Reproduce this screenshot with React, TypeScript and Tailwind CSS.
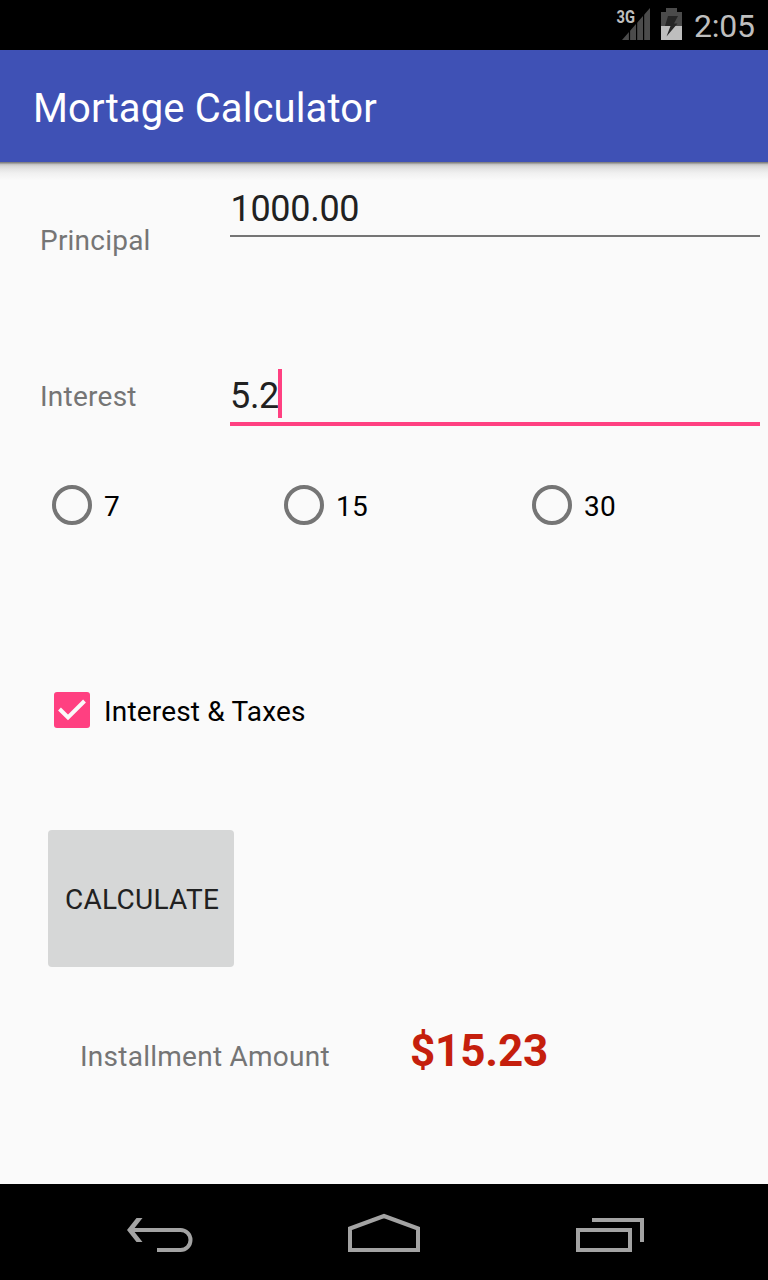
import React, { useState } from "react";

function StatusBar() {
  return (
    <div className="flex h-[50px] items-center justify-end bg-black pr-[11px] text-[#bebebe]">
      <div className="flex h-[50px] w-[36px] shrink-0">
        <svg width="36" height="50" viewBox="0 0 36 50">
          <path d="M35 8V40H7Z" fill="#4b4b4b" />
          <path d="M14.500 28V40M21.600 20V40M28.600 12V40" stroke="#000" strokeWidth="1.2" />
          <path d="M0 8H20.500V24H0Z" fill="#000" />
          <text x="1.500" y="23" fontSize="18" fontWeight="700" fill="#bebebe" fontFamily="Roboto, sans-serif" textLength="18.5" lengthAdjust="spacingAndGlyphs">
            3G
          </text>
        </svg>
      </div>
      <svg className="ml-[10px]" width="22" height="50" viewBox="0 0 22 50">
        <path d="M0 12H5V8H16V12H21V26H0Z" fill="#4b4b4b" />
        <path d="M0 26H21V40H0Z" fill="#bebebe" />
        <path d="M7 16H17L13 23.500H16.500L5.500 36.500L9.500 26H4Z" fill="#262626" />
      </svg>
      <span className="ml-[11px] w-[63px] whitespace-nowrap pt-[2px] text-[32px] leading-[50px] tracking-[-0.2px]">2:05</span>
    </div>
  );
}

function Radio({ label, width, onPick, picked }: { label: string; width: string; onPick: () => void; picked: boolean }) {
  return (
    <button type="button" role="radio" aria-checked={picked} onClick={onPick} className={`flex items-center text-black ${width}`}>
      <span className="flex size-10 items-center justify-center rounded-full border-4 border-[#757575]">
        {picked && <span className="size-5 rounded-full bg-[#ff4081]" />}
      </span>
      <span className="ml-3 pt-[4px] text-[28px] leading-10 tracking-[0.3px]">{label}</span>
    </button>
  );
}

function NavigationBar() {
  return (
    <div className="flex h-24 items-center justify-between bg-black pl-[124px] pr-[124px]">
      <svg width="72" height="96" viewBox="124 1184 72 96" fill="none" stroke="#a3a3a3">
        <path d="M131 1230H180.500A10 10 0 0 1 180.500 1250H157" strokeWidth="4" />
        <path d="M136.500 1218H142.500L133 1230L142.500 1242H136.500L127 1230Z" fill="#a3a3a3" stroke="none" />
      </svg>
      <svg width="76" height="96" viewBox="346 1184 76 96" fill="none" stroke="#a3a3a3" strokeWidth="4">
        <path d="M350 1250V1228.500L384 1216L418 1228.500V1250Z" />
      </svg>
      <svg width="72" height="96" viewBox="572 1184 72 96" fill="none" stroke="#a3a3a3" strokeWidth="4">
        <path d="M578 1230H630V1250H578ZM592 1220H642V1242" />
      </svg>
    </div>
  );
}

export default function App() {
  const [years, setYears] = useState<number | null>(null);
  const [taxes, setTaxes] = useState(true);
  return (
    <div className="flex h-[1280px] w-[768px] flex-col overflow-hidden bg-[#fafafa] font-[Roboto,sans-serif] text-[28px] text-[#757575]">
      <StatusBar />
      <header className="flex h-28 items-center bg-[#3f51b5] pl-[33px] pr-8 pt-1.5 text-[40px] leading-[48px] text-white">
        <h1 className="whitespace-nowrap tracking-[0.12px]">Mortage Calculator</h1>
      </header>
      <div className="h-5 shrink-0 bg-[linear-gradient(to_bottom,#808080_0,#858585_1px,#bdbdbd_2px,#d6d6d6_4px,#e4e4e4_7px,#f0f0f0_11px,#fafafa_18px)]" />

      <main className="flex grow flex-col">
        <div className="flex h-[173px] items-start pl-10 pr-2">
          <label className="w-[190px] pt-[39px] leading-10 tracking-[0.22px]">Principal</label>
          <div className="flex h-[55px] grow items-center border-b-2 border-[#757575] pl-[0.5px] pt-[1px] text-[36px] leading-[48px] tracking-[-0.3px] text-[#212121]">
            1000.00
          </div>
        </div>

        <div className="flex h-[130px] items-start pl-10 pr-2">
          <label className="w-[190px] pt-[22px] leading-10 tracking-[0.25px]">Interest</label>
          <div className="flex h-[71px] grow items-start border-b-4 border-[#ff4081] pt-[14px] text-[36px] leading-[55px] tracking-[-0.3px] text-[#212121]">
            <span className="flex w-12">5.2</span>
            <span className="h-[49px] w-1 shrink-0 bg-[#ff4081]" />
          </div>
        </div>

        <div role="radiogroup" className="flex h-10 items-center pl-[52px]">
          <Radio label="7" width="w-[232px]" picked={years === 7} onPick={() => setYears(7)} />
          <Radio label="15" width="w-[248px]" picked={years === 15} onPick={() => setYears(15)} />
          <Radio label="30" width="w-[120px]" picked={years === 30} onPick={() => setYears(30)} />
        </div>

        <button
          type="button"
          role="checkbox"
          aria-checked={taxes}
          onClick={() => setTaxes(!taxes)}
          className="mt-[165px] flex h-10 items-center pl-[54px] text-black"
        >
          <span className="flex size-9 rounded-[3px] bg-[#ff4081]">
            {taxes && (
              <svg width="36" height="36" viewBox="0 0 36 36" fill="none" stroke="#fafafa" strokeWidth="4">
                <path d="M5.500 17L14 25.500L30.500 9" />
              </svg>
            )}
          </span>
          <span className="ml-[14px] whitespace-nowrap pt-[4px] leading-10 tracking-[0.18px]">Interest &amp; Taxes</span>
        </button>

        <button
          type="button"
          className="ml-12 mt-[100px] flex h-[137px] w-[186px] items-center justify-center rounded-[4px] bg-[#d6d7d7] pl-[2px] pt-[2px] tracking-[0.3px] text-[#212121]"
        >
          CALCULATE
        </button>

        <div className="mt-[54px] flex items-start pl-20">
          <span className="w-[330px] whitespace-nowrap pt-[16px] leading-10 tracking-[0.25px]">Installment Amount</span>
          <span className="text-[44px] font-bold leading-[60px] tracking-[-0.15px] text-[#c51f0d]">$15.23</span>
        </div>
      </main>

      <NavigationBar />
    </div>
  );
}
